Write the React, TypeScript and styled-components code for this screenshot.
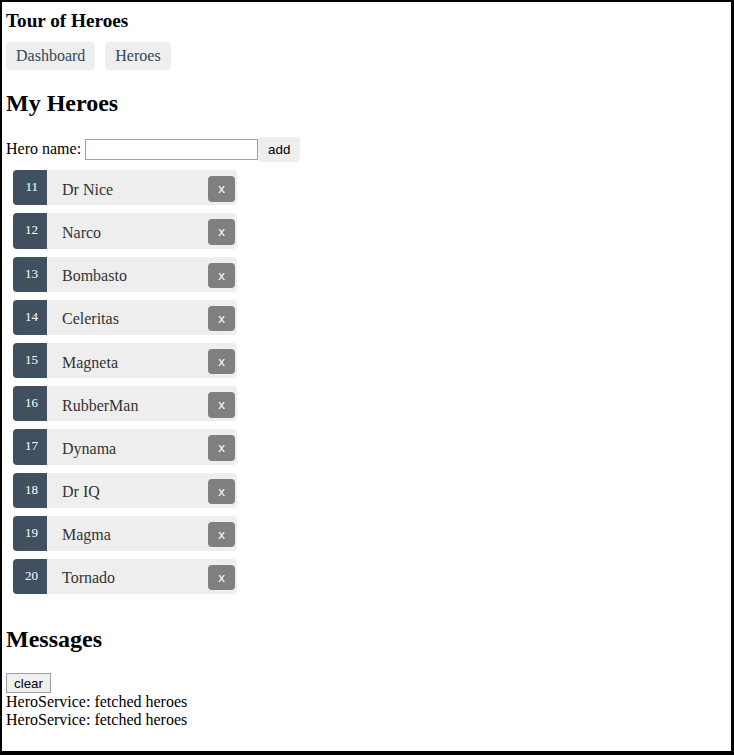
import React from "react";
import styled, { createGlobalStyle } from "styled-components";

const Global = createGlobalStyle`
  html, body { margin: 0; padding: 0; background: #fff; }
  body { font-family: "Liberation Serif", "Times New Roman", serif; font-size: 16px; color: #000; }
`;

const Frame = styled.div`
  box-sizing: border-box;
  min-height: 755px;
  border-style: solid;
  border-color: #000;
  border-width: 2px 3px 4px 2px;
  padding: 0 4px;
`;

const Title = styled.h1`
  font-size: 19.2px;
  font-weight: bold;
  margin: 8px 0 0 0;
`;

const Nav = styled.nav`
  display: flex;
  gap: 10px;
  margin-top: 10px;
`;

const NavLink = styled.a`
  display: inline-block;
  padding: 5px 10px;
  background-color: #eee;
  border-radius: 4px;
  color: #334953;
  text-decoration: none;
  line-height: 18.4px;
`;

const SectionTitle = styled.h2<{ $top: number }>`
  font-size: 24px;
  font-weight: bold;
  margin: ${(p) => p.$top}px 0 19.9px 0;
`;

const AddRow = styled.div``;

const NameInput = styled.input`
  box-sizing: border-box;
  width: 173px;
  height: 21px;
  border: 1px solid #a0a0a0;
  padding: 1px 2px;
  font-family: "Liberation Sans", Arial, sans-serif;
  font-size: 13.33px;
  vertical-align: baseline;
`;

const SoftButton = styled.button`
  background-color: #eee;
  border: none;
  padding: 5px 10px;
  border-radius: 4px;
  font-family: "Liberation Sans", Arial, sans-serif;
  font-size: 13.33px;
  color: #000;
  cursor: pointer;
`;

const HeroList = styled.ul`
  list-style: none;
  margin: 0 0 32px -1px;
  padding: 0;
  width: 240px;
`;

const HeroItem = styled.li`
  display: flex;
  height: 35.2px;
  margin: 8px;
  background-color: #eee;
  border-radius: 4px;
  cursor: pointer;
`;

const Badge = styled.span`
  box-sizing: border-box;
  width: 34px;
  padding: 10px 9px 0 0;
  font-size: 13px;
  line-height: 13px;
  text-align: right;
  color: #fff;
  background-color: #405061;
  border-radius: 4px 0 0 4px;
`;

const HeroName = styled.span`
  margin-left: 15px;
  padding-top: 10.5px;
  color: #333;
  line-height: 18.4px;
`;

const DeleteButton = styled(SoftButton)`
  align-self: flex-start;
  margin: 6px 2px 0 auto;
  background-color: gray;
  color: #fff;
  line-height: 15.3px;
`;

const ClearButton = styled.button`
  display: block;
  box-sizing: border-box;
  width: 45px;
  height: 20px;
  padding: 0;
  border: 1px solid #a0a0a0;
  background: #efefef;
  font-family: "Liberation Sans", Arial, sans-serif;
  font-size: 13.33px;
  color: #000;
`;

const Message = styled.div`
  line-height: 18.4px;
`;

const heroes = [
  { id: 11, name: "Dr Nice" },
  { id: 12, name: "Narco" },
  { id: 13, name: "Bombasto" },
  { id: 14, name: "Celeritas" },
  { id: 15, name: "Magneta" },
  { id: 16, name: "RubberMan" },
  { id: 17, name: "Dynama" },
  { id: 18, name: "Dr IQ" },
  { id: 19, name: "Magma" },
  { id: 20, name: "Tornado" },
];

export default function App() {
  return (
    <>
      <Global />
      <Frame>
        <Title>Tour of Heroes</Title>
        <Nav>
          <NavLink href="#">Dashboard</NavLink>
          <NavLink href="#">Heroes</NavLink>
        </Nav>
        <SectionTitle $top={20}>My Heroes</SectionTitle>
        <AddRow>
          Hero name: <NameInput />
          <SoftButton>add</SoftButton>
        </AddRow>
        <HeroList>
          {heroes.map((h) => (
            <HeroItem key={h.id}>
              <Badge>{h.id}</Badge>
              <HeroName>{h.name}</HeroName>
              <DeleteButton>x</DeleteButton>
            </HeroItem>
          ))}
        </HeroList>
        <SectionTitle $top={1}>Messages</SectionTitle>
        <ClearButton>clear</ClearButton>
        <Message>HeroService: fetched heroes</Message>
        <Message>HeroService: fetched heroes</Message>
      </Frame>
    </>
  );
}
